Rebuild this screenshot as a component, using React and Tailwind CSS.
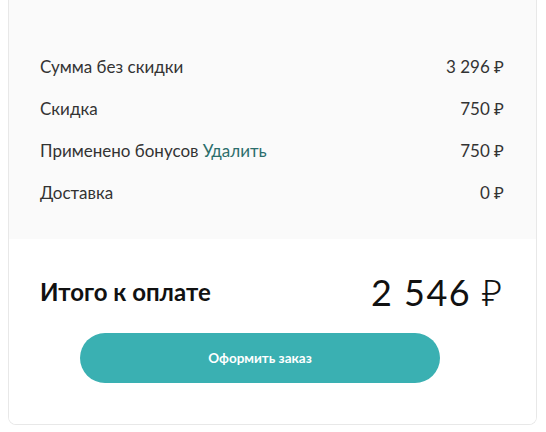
export default function App() {
  const rows = [
    { label: "Сумма без скидки", value: "3 296 ₽" },
    { label: "Скидка", value: "750 ₽" },
    { label: "Применено бонусов", link: "Удалить", value: "750 ₽" },
    { label: "Доставка", value: "0 ₽" },
  ];
  return (
    <div className="w-[546px] h-[432px] bg-white overflow-hidden px-2 font-['Lato','Noto_Sans',sans-serif]">
      <div className="w-[529px] border-x border-b border-[#e8e8e8] rounded-b-lg overflow-hidden">
        <div className="bg-[#fafafa] pt-[55px] pb-[34px] pl-[31px] pr-[32px] flex flex-col gap-[18px]">
          {rows.map((r) => (
            <div key={r.label} className="flex justify-between items-center text-[17px] leading-6 text-[#333333]">
              <span>
                {r.label}
                {r.link && <span className="text-[#2c6e6c]"> {r.link}</span>}
              </span>
              <span>{r.value}</span>
            </div>
          ))}
        </div>
        <div className="bg-white pt-[33px] pb-[41px] pl-[31px] pr-[32px]">
          <div className="flex justify-between items-center h-10">
            <span className="text-[24px] font-bold text-[#111111]">Итого к оплате</span>
            <span className="text-[36px] font-normal text-[#111111] tracking-[1.5px]">
              2 546 <span className="font-light">₽</span>
            </span>
          </div>
          <div className="flex mt-[21px] pl-[40px]">
            <button className="w-[360px] h-[50px] rounded-full bg-[#3ab0b2] text-white text-[13.5px] font-bold">
              Оформить заказ
            </button>
          </div>
        </div>
      </div>
    </div>
  );
}
